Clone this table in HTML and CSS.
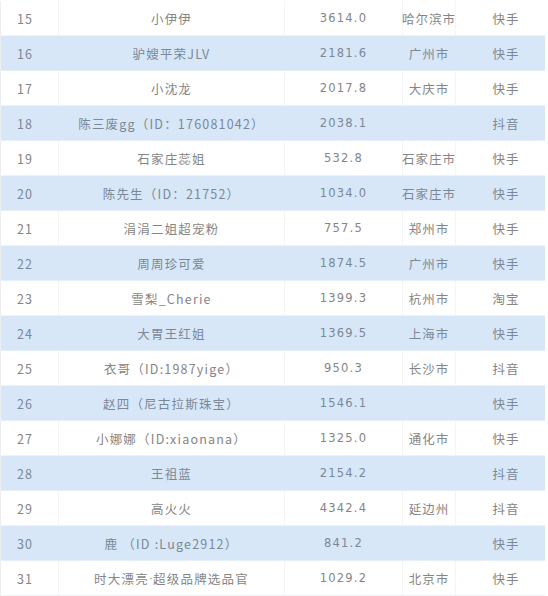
FILE: index.html
```html
<!DOCTYPE html>
<html lang="zh">
<head>
<meta charset="utf-8">
<link rel="stylesheet" href="styles.css">
</head>
<body>
<div class="table">
  <div class="row"><div class="c rank">15</div><div class="c name">小伊伊</div><div class="c num">3614.0</div><div class="c city">哈尔滨市</div><div class="c plat">快手</div></div>
  <div class="row alt"><div class="c rank">16</div><div class="c name">驴嫂平荣JLV</div><div class="c num">2181.6</div><div class="c city">广州市</div><div class="c plat">快手</div></div>
  <div class="row"><div class="c rank">17</div><div class="c name">小沈龙</div><div class="c num">2017.8</div><div class="c city">大庆市</div><div class="c plat">快手</div></div>
  <div class="row alt"><div class="c rank">18</div><div class="c name">陈三废gg（ID：176081042）</div><div class="c num">2038.1</div><div class="c city"></div><div class="c plat">抖音</div></div>
  <div class="row"><div class="c rank">19</div><div class="c name">石家庄蕊姐</div><div class="c num">532.8</div><div class="c city">石家庄市</div><div class="c plat">快手</div></div>
  <div class="row alt"><div class="c rank">20</div><div class="c name">陈先生（ID：21752）</div><div class="c num">1034.0</div><div class="c city">石家庄市</div><div class="c plat">快手</div></div>
  <div class="row"><div class="c rank">21</div><div class="c name">涓涓二姐超宠粉</div><div class="c num">757.5</div><div class="c city">郑州市</div><div class="c plat">快手</div></div>
  <div class="row alt"><div class="c rank">22</div><div class="c name">周周珍可爱</div><div class="c num">1874.5</div><div class="c city">广州市</div><div class="c plat">快手</div></div>
  <div class="row"><div class="c rank">23</div><div class="c name">雪梨_Cherie</div><div class="c num">1399.3</div><div class="c city">杭州市</div><div class="c plat">淘宝</div></div>
  <div class="row alt"><div class="c rank">24</div><div class="c name">大胃王红姐</div><div class="c num">1369.5</div><div class="c city">上海市</div><div class="c plat">快手</div></div>
  <div class="row"><div class="c rank">25</div><div class="c name">衣哥（ID:1987yige）</div><div class="c num">950.3</div><div class="c city">长沙市</div><div class="c plat">抖音</div></div>
  <div class="row alt"><div class="c rank">26</div><div class="c name">赵四（尼古拉斯珠宝）</div><div class="c num">1546.1</div><div class="c city"></div><div class="c plat">快手</div></div>
  <div class="row"><div class="c rank">27</div><div class="c name">小娜娜（ID:xiaonana）</div><div class="c num">1325.0</div><div class="c city">通化市</div><div class="c plat">快手</div></div>
  <div class="row alt"><div class="c rank">28</div><div class="c name">王祖蓝</div><div class="c num">2154.2</div><div class="c city"></div><div class="c plat">抖音</div></div>
  <div class="row"><div class="c rank">29</div><div class="c name">高火火</div><div class="c num">4342.4</div><div class="c city">延边州</div><div class="c plat">抖音</div></div>
  <div class="row alt"><div class="c rank">30</div><div class="c name">鹿 （ID :Luge2912）</div><div class="c num">841.2</div><div class="c city"></div><div class="c plat">快手</div></div>
  <div class="row"><div class="c rank">31</div><div class="c name">时大漂亮<span class="dot">·</span>超级品牌选品官</div><div class="c num">1029.2</div><div class="c city">北京市</div><div class="c plat">快手</div></div>
</div>
</body>
</html>
```
FILE: styles.css
```css
html, body {
  margin: 0;
  padding: 0;
  background: #ffffff;
}
body {
  font-family: "Noto Sans CJK SC", "Noto Sans", sans-serif;
  font-size: 12.5px;
  color: #858585;
  letter-spacing: 1px;
}
.table {
  width: 544px;
  margin-top: 1px;
  border-left: 1px solid #eceef2;
}
.row {
  display: grid;
  grid-template-columns: 57px 226px 118px 53px 89px;
  height: 35px;
  box-sizing: border-box;
  border-bottom: 1px solid #f0f2f5;
  background: #ffffff;
}
.row.alt {
  background: #d7e7f8;
  color: #7b8897;
  border-bottom-color: #e6eef7;
}
.c {
  display: flex;
  align-items: center;
  justify-content: center;
  white-space: nowrap;
  border-left: 1px solid #f5f5f5;
}
.row.alt .c {
  border-left-color: #d7e7f8;
}
.c.rank {
  justify-content: flex-start;
  padding-left: 16px;
  border-left: none;
}
.c.name {
  letter-spacing: 1.2px;
}
.c.num {
  font-family: "DejaVu Sans", sans-serif;
  font-size: 11.5px;
  letter-spacing: 1.2px;
}
.c.plat {
  padding-left: 12px;
}
.dot {
  font-family: "Liberation Sans", sans-serif;
  letter-spacing: 0;
}
```
